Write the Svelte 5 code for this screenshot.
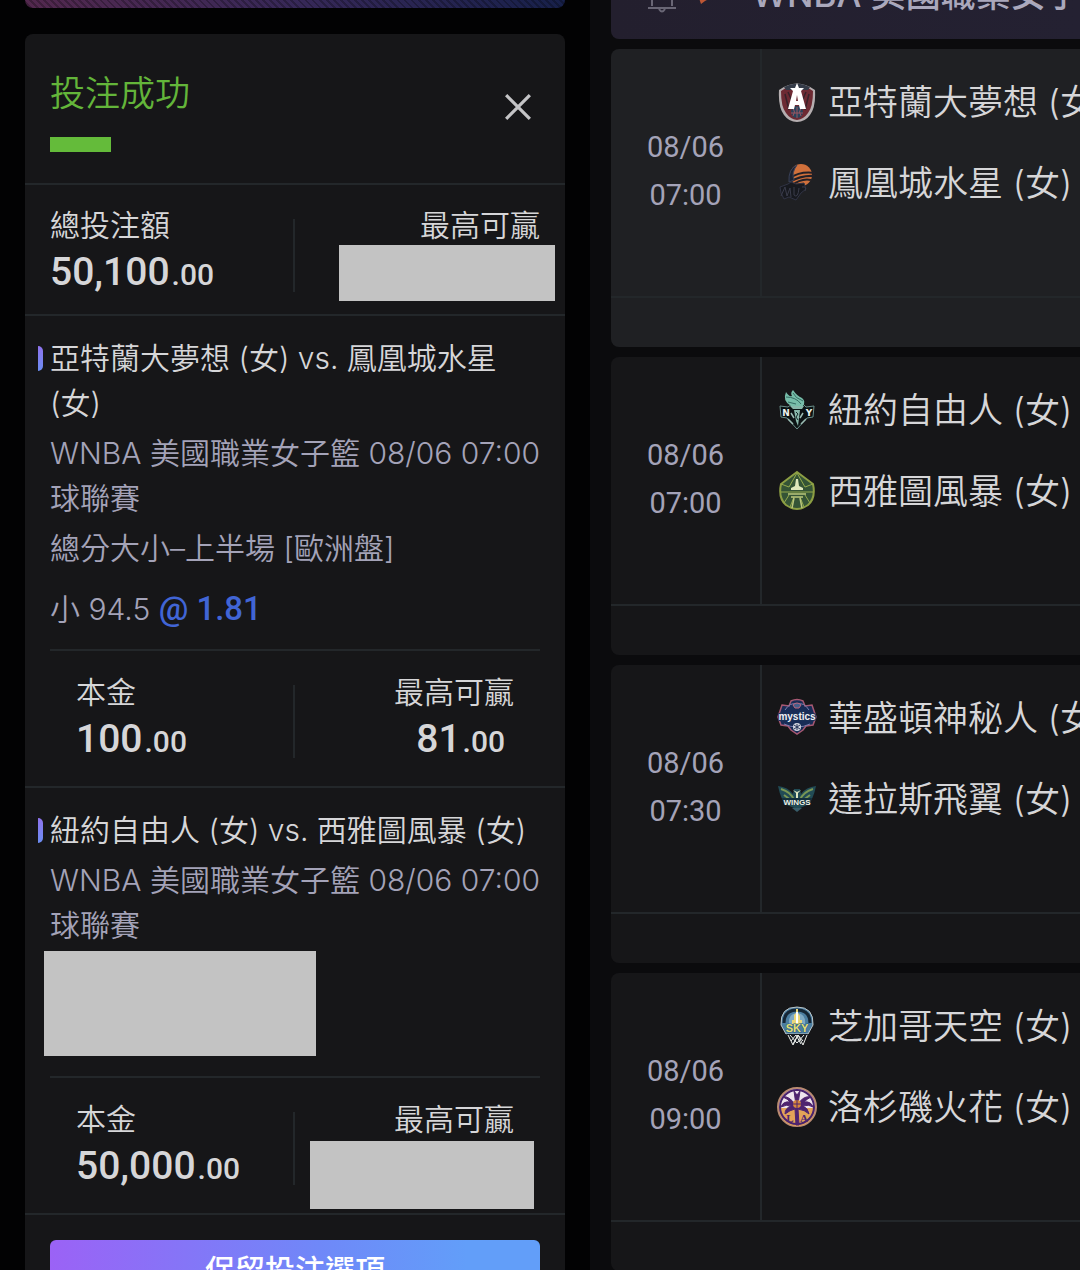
<script lang="ts">
  // Bet slip receipt on the left, fixture list of the league on the right.
  type Amount = { whole: string; cents: string }
  type Bet = {
    id: number
    title: string
    league: string
    time: string
    market?: string
    pick?: string
    odds?: string
    stake: Amount
    win?: Amount
  }

  const league = 'WNBA 美國職業女子籃球聯賽'

  const bets: Bet[] = [
    {
      id: 1,
      title: '亞特蘭大夢想 (女) vs. 鳳凰城水星 (女)',
      league,
      time: '08/06 07:00',
      market: '總分大小–上半場 [歐洲盤]',
      pick: '小 94.5',
      odds: '@ 1.81',
      stake: { whole: '100', cents: '.00' },
      win: { whole: '81', cents: '.00' }
    },
    {
      id: 2,
      title: '紐約自由人 (女) vs. 西雅圖風暴 (女)',
      league,
      time: '08/06 07:00',
      stake: { whole: '50,000', cents: '.00' }
    }
  ]

  const matches = [
    { date: '08/06', time: '07:00', home: ['dream', '亞特蘭大夢想 (女)'], away: ['mercury', '鳳凰城水星 (女)'] },
    { date: '08/06', time: '07:00', home: ['liberty', '紐約自由人 (女)'], away: ['storm', '西雅圖風暴 (女)'] },
    { date: '08/06', time: '07:30', home: ['mystics', '華盛頓神秘人 (女)'], away: ['wings', '達拉斯飛翼 (女)'] },
    { date: '08/06', time: '09:00', home: ['sky', '芝加哥天空 (女)'], away: ['sparks', '洛杉磯火花 (女)'] }
  ]

  let open = $state(true)
</script>

{#snippet amount(value: Amount)}
  <span class="amount">{value.whole}<small>{value.cents}</small></span>
{/snippet}

{#snippet logo(name: string)}
  <svg class="logo" viewBox="0 0 42 42" aria-hidden="true">
    {#if name === 'dream'}
      <path d="M3 9Q21-4 39 9Q40 26 34 34Q29 41 21 41Q13 41 8 34Q2 26 3 9Z" fill="#b5aeb0" />
      <path d="M5 10Q21-2 37 10Q37 26 32 32Q28 38 21 39Q14 38 10 32Q5 26 5 10Z" fill="#6d2a33" />
      <path d="M8 6Q21-1 34 6L32 9H10Z" fill="#343b48" />
      <path d="M9 13L13 29M33 13L29 29M12 11L16 20M30 11L26 20" stroke="#37222a" stroke-width="1.5" />
      <circle cx="21" cy="31" r="6" fill="#28445c" />
      <path d="M15 32H27M21 26V37M17 27Q20 31 17 35M25 27Q22 31 25 35" fill="none" stroke="#9b5561" />
      <path
        d="M21 2L23 7H28L25 10L30 28H24L23 24H19L18 28H12L17 10L14 7H19ZM21 14L20 20H22Z"
        fill="#fff"
        fill-rule="evenodd"
      />
    {:else if name === 'mercury'}
      <circle cx="25" cy="13" r="11" fill="#d0703b" />
      <path d="M14 16Q24 9 39 11M14 20Q25 13 39 14M15 24Q25 16 35 18" fill="none" stroke="#222027" stroke-width="2" />
      <path d="M13 20Q12 7 21 3Q15 11 18 18Z" fill="#1c2231" stroke="#3a4158" />
      <path d="M4 25L12 22L15 20L20 22L28 21L30 27L25 31L20 38L13 35L8 37L5 31Z" fill="#17191f" stroke="#303344" />
      <path d="M5 34L9 25L11 34L14 26L15 35M18 25V33Q22 37 23 26M26 25Q31 24 29 29" fill="none" stroke="#3a3c4b" />
    {:else if name === 'liberty'}
      <path d="M4 17L12 18L16 15H27L30 18L38 17L37 28L31 29L21 40L11 29L5 28Z" fill="#0b1213" stroke="#6a8e89" />
      <path d="M15 17Q6 12 10 3Q13 8 16 7Q14 4 17 1Q21 7 26 9Q30 12 27 17Z" fill="#77bda9" />
      <path d="M10 8Q20 8 25 15M17 4Q19 9 27 12M12 13L20 15" fill="none" stroke="#356c63" />
      <path d="M14 17H28L26 20H17ZM18 21H24L22 37L20 32Z" fill="#88b7aa" />
      <path d="M12 30L17 35M30 30L25 35M15 24L18 29M27 24L24 29" stroke="#9bbbb3" stroke-width="1.5" />
      <path d="M20 23L22 25L20 28L22 31" fill="none" stroke="#152b29" />
      <text x="10" y="27" class="block-mark" fill="#eef3ef">N</text>
      <text x="33" y="27" class="block-mark" fill="#eef3ef">Y</text>
    {:else if name === 'storm'}
      <path d="M21 2L37 14Q40 28 32 35Q21 43 10 35Q2 28 5 14Z" fill="#355436" stroke="#8c9e43" stroke-width="2" />
      <path d="M21 3L13 17L5 14M21 3L29 17L37 14M5 22H37M8 33L13 25M34 33L29 25M14 37L18 27M28 37L24 27" fill="none" stroke="#94a94c" />
      <path d="M20 9H22L23 16L27 18V20H15V18L19 16Z" fill="#dfe7bb" />
      <path d="M12 24H30M15 27H27" stroke="#bbc77c" stroke-width="1.5" />
      <path d="M18 28L16 38M24 28L26 38" stroke="#bbc77c" stroke-width="1.5" />
    {:else if name === 'mystics'}
      <path d="M6 8L13 9L15 4Q21 1 27 4L29 9L36 8L38 14L40 20L37 28L30 29L27 33L21 37L15 33L12 29L5 28L2 20L4 14Z" fill="#182c56" stroke="#a65872" stroke-width="1.5" />
      <path d="M9 13Q14 5 21 7Q28 5 33 13M8 27Q14 30 21 30Q28 30 34 27" fill="none" stroke="#7a7eae" />
      <path d="M17 8Q21 4 25 8L23 11H19Z" fill="#465e8b" stroke="#bd667c" />
      <circle cx="21" cy="30" r="4" fill="#d2d5dd" />
      <path d="M18 28L24 32M18 32L24 28M21 27V33" stroke="#273559" />
      <text x="21" y="23" class="mystic-mark" fill="#f0eff4" stroke="#1b3157" stroke-width="2" paint-order="stroke">mystics</text>
    {:else if name === 'wings'}
      <path d="M2 8Q12 9 17 16L18 11H24L25 16Q30 9 40 8Q37 23 31 27L24 30L21 33L18 30L11 27Q5 23 2 8Z" fill="#214b55" />
      <path d="M5 11Q15 14 18 22M37 11Q27 14 24 22M8 17L16 23M34 17L26 23" fill="none" stroke="#7a9754" stroke-width="2" />
      <path d="M17 12L20 15L20 20H22L22 15L25 12L21 14Z" fill="#e0e8c2" />
      <path d="M6 20H36L34 27H8Z" fill="#14303d" />
      <path d="M16 30H26L21 34Z" fill="#385c69" />
      <text x="21" y="27" class="wing-mark" fill="#edf0e5">WINGS</text>
    {:else if name === 'sky'}
      <path d="M5 20Q4 2 21 2Q38 2 37 20L32 29H10Z" fill="#4b7da0" stroke="#bcc6c8" />
      <path d="M8 18Q8 5 21 5Q34 5 34 18" fill="none" stroke="#152635" stroke-width="3" />
      <path d="M13 19Q12 9 21 8Q30 9 29 19Z" fill="#7fa9c4" />
      <path d="M16 19V15H18V10L20 8V4H22V8L24 11V15H26V19Z" fill="#ead77a" />
      <path d="M21 7V18" stroke="#fff" stroke-width="2" />
      <path d="M10 29H32L28 34L25 41L21 38L17 41L14 34Z" fill="#151a20" />
      <path d="M12 30L17 40L22 30L27 40L31 30M14 30L21 38L28 30M15 36L20 30L25 39M27 36L22 30L17 39" fill="none" stroke="#eef0ed" />
      <text x="21" y="27" class="sky-mark" fill="#e6df72" stroke="#286087" paint-order="stroke">SKY</text>
    {:else}
      <circle cx="21" cy="21" r="19" fill="#eee4ed" stroke="#b98a72" stroke-width="2" />
      <path d="M3 22H39A18 18 0 0 1 3 22Z" fill="#e3a258" />
      <circle cx="21" cy="21" r="17" fill="none" stroke="#49236e" stroke-width="2" />
      <path d="M20 19Q12 9 7 11Q12 13 14 16Q7 15 5 21Q11 18 15 20Q9 22 9 28Q14 24 19 23L20 39H23L22 23Q29 24 33 28Q32 22 27 20Q33 18 37 21Q35 15 28 16Q31 13 35 11Q28 9 22 18L24 5L21 9L18 5Z" fill="#4f246f" stroke="#4f246f" />
      <circle cx="21" cy="18" r="4" fill="#d9873d" />
      <path d="M21 14V22M17 18H25" stroke="#4f246f" />
      <text x="14" y="36" class="serif-mark" fill="#4f246f">L</text>
      <text x="28" y="36" class="serif-mark" fill="#4f246f">A</text>
    {/if}
  </svg>
{/snippet}

<main>
  <aside>
    <div class="promo"></div>
    {#if open}
      <section class="slip">
        <header class="slip-head">
          <div>
            <h1>投注成功</h1>
            <div class="redacted green"></div>
          </div>
          <button class="close" aria-label="關閉" onclick={() => (open = false)}>
            <svg viewBox="0 0 26 26"><path d="M2 2L24 24M24 2L2 24" /></svg>
          </button>
        </header>

        <div class="stats total">
          <div class="stat">
            <span>總投注額</span>
            {@render amount({ whole: '50,100', cents: '.00' })}
          </div>
          <div class="stat right">
            <span>最高可贏</span>
            <i class="redacted total-win"></i>
          </div>
        </div>

        {#each bets as bet (bet.id)}
          <article class="bet">
            <h2>{bet.title}</h2>
            <div class="league"><span>{bet.league}</span><time>{bet.time}</time></div>
            {#if bet.market}
              <p class="market">{bet.market}</p>
              <p class="pick">{bet.pick} <b>{bet.odds}</b></p>
            {:else}
              <div class="redacted selection"></div>
            {/if}
            <div class="stats">
              <div class="stat">
                <span>本金</span>
                {@render amount(bet.stake)}
              </div>
              <div class="stat right">
                <span>最高可贏</span>
                {#if bet.win}
                  {@render amount(bet.win)}
                {:else}
                  <i class="redacted bet-win"></i>
                {/if}
              </div>
            </div>
          </article>
        {/each}

        <footer><button class="keep">保留投注選項</button></footer>
      </section>
    {/if}
  </aside>

  <section class="fixtures">
    <header class="league-head">
      <svg class="bell" viewBox="0 0 30 36" aria-hidden="true">
        <path d="M5 29V15Q5 5 15 5Q25 5 25 15V29M1 31H29M12 32Q15 37 18 32" />
      </svg>
      <svg class="flame" viewBox="0 0 30 36" aria-hidden="true">
        <path d="M5 4Q25 3 25 14Q20 20 12 24L8 27L5 18Z" />
      </svg>
      <h2>{league}</h2>
    </header>

    {#each matches as match, i (i)}
      <article class="match" class:active={i === 0}>
        <div class="match-body">
          <div class="when"><span>{match.date}</span><span>{match.time}</span></div>
          <div class="teams">
            {#each [match.home, match.away] as [mark, name] (mark)}
              <div class="team">{@render logo(mark)}<span>{name}</span></div>
            {/each}
          </div>
        </div>
        <div class="match-foot"></div>
      </article>
    {/each}
  </section>
</main>

<style>
  :global(body) {
    margin: 0;
    background: #020203;
  }
  main {
    --line: #23272a;
    --text: #d6d6d8;
    --muted: #a4a3b8;
    --card: #161618;
    display: grid;
    grid-template-columns: minmax(0, 59fr) minmax(0, 49fr);
    height: 100vh;
    overflow: hidden;
    color: var(--text);
    font-family: Inter, 'Noto Sans CJK TC', sans-serif;
    font-size: 30px;
    font-weight: 350;
    line-height: 45px;
  }
  h1,
  h2,
  p {
    margin: 0;
    font-weight: inherit;
  }
  button {
    padding: 0;
    border: 0;
    font: inherit;
    cursor: pointer;
  }
  aside {
    padding: 0 25px;
    background: #020203;
  }
  .promo {
    height: 8px;
    margin-bottom: 26px;
    border-radius: 0 0 8px 8px;
    background:
      repeating-linear-gradient(45deg, transparent 0 3px, rgba(0, 0, 0, 0.25) 3px 5px),
      linear-gradient(90deg, #53284e, #372858 50%, #17204a);
  }
  .slip {
    border-radius: 8px;
    background: var(--card);
  }
  .slip-head {
    display: flex;
    justify-content: space-between;
    padding: 35px 33px 31px 25px;
    border-bottom: 2px solid var(--line);
  }
  h1 {
    margin-bottom: 20px;
    color: #63b53a;
    font-size: 35px;
    line-height: 48px;
  }
  .redacted {
    background: #c3c3c3;
  }
  .green {
    width: 61px;
    height: 15px;
    background: #64bb3a;
  }
  .close {
    width: 28px;
    height: 28px;
    margin-top: 24px;
    background: none;
  }
  .close svg {
    display: block;
    fill: none;
    stroke: #c4c4c6;
    stroke-width: 3;
  }
  .stats {
    position: relative;
    display: grid;
    grid-template-columns: 1fr 1fr;
    padding: 19px 26px 20px;
    border-top: 2px solid var(--line);
  }
  .stats::after {
    content: '';
    position: absolute;
    top: 34px;
    left: calc(50% - 2px);
    width: 2px;
    height: 73px;
    background: var(--line);
  }
  .total {
    padding: 18px 25px 15px;
    border-top: 0;
    border-bottom: 2px solid var(--line);
  }
  .stat {
    position: relative;
    display: flex;
    flex-direction: column;
  }
  .right {
    align-items: flex-end;
  }
  .amount {
    font-family: Roboto, sans-serif;
    font-size: 39px;
    font-weight: 500;
    line-height: 49px;
  }
  .right .amount {
    padding-right: 9px;
  }
  .amount small {
    padding-left: 2px;
    font-size: 30px;
  }
  .total-win {
    position: absolute;
    top: 42px;
    right: -15px;
    width: 216px;
    height: 56px;
  }
  .bet-win {
    position: absolute;
    top: 44px;
    right: -20px;
    width: 224px;
    height: 68px;
    z-index: 1;
  }
  .bet {
    position: relative;
    padding: 20px 25px 0;
    border-bottom: 2px solid var(--line);
  }
  .bet::before {
    content: '';
    position: absolute;
    top: 30px;
    left: 13px;
    width: 5px;
    height: 25px;
    border-radius: 0 5px 5px 0;
    background: linear-gradient(#8f73ee, #6b8df2);
  }
  .bet h2 {
    font-size: 30px;
  }
  .league {
    display: flex;
    margin: 5px 0;
    color: var(--muted);
  }
  .league span {
    flex: 1;
  }
  .league time {
    white-space: nowrap;
  }
  .market,
  .pick {
    color: var(--muted);
  }
  .pick {
    margin: 15px 0 17px;
  }
  .pick b {
    color: #4165d5;
    font-family: Roboto, sans-serif;
    font-size: 33px;
    font-weight: 500;
  }
  .selection {
    width: 272px;
    height: 105px;
    margin: -2px 0 20px -6px;
  }
  footer {
    padding: 25px;
  }
  .keep {
    width: 100%;
    height: 60px;
    border-radius: 6px;
    background: linear-gradient(90deg, #9b62f6, #6f88f8 55%, #629ef9 85%);
    color: #fff;
    font-weight: 500;
  }
  .fixtures {
    display: flex;
    flex-direction: column;
    gap: 10px;
    padding-left: 21px;
    background: #0b0b0d;
    overflow: hidden;
  }
  .league-head {
    display: flex;
    flex: none;
    align-items: flex-end;
    height: 39px;
    padding-left: 36px;
    border-radius: 0 0 0 8px;
    background: linear-gradient(90deg, #231f2e, #242132);
    overflow: hidden;
    white-space: nowrap;
  }
  .league-head svg {
    flex: none;
    width: 30px;
    height: 36px;
    margin-bottom: 26px;
  }
  .bell {
    fill: none;
    stroke: #696675;
    stroke-width: 2;
  }
  .league-head .flame {
    margin: 0 29px 26px 16px;
    fill: #bd5735;
  }
  .league-head h2 {
    color: #aaa8bc;
    font-size: 35px;
    font-weight: 500;
    line-height: 48px;
    margin-bottom: 21px;
  }
  .match {
    flex: none;
    border-radius: 8px 0 0 8px;
    background: var(--card);
  }
  .active {
    background: #1f2023;
  }
  .match-body {
    display: flex;
    height: 247px;
    border-bottom: 2px solid var(--line);
  }
  .match-foot {
    height: 49px;
  }
  .when {
    display: flex;
    flex: none;
    flex-direction: column;
    justify-content: center;
    width: 149px;
    padding-bottom: 4px;
    border-right: 2px solid var(--line);
    color: var(--muted);
    font-family: Roboto, sans-serif;
    font-size: 29px;
    font-weight: 400;
    line-height: 48px;
    text-align: center;
  }
  .teams {
    display: flex;
    flex-direction: column;
    gap: 33px;
    padding: 29px 0 0 14px;
  }
  .team {
    display: flex;
    align-items: center;
    gap: 10px;
    font-size: 35px;
    line-height: 48px;
    white-space: nowrap;
  }
  .logo {
    flex: none;
    width: 42px;
    height: 42px;
  }
  .logo text {
    text-anchor: middle;
    font-weight: 700;
  }
  .serif-mark {
    font-family: 'Liberation Serif', serif;
    font-size: 11px;
  }
  .block-mark {
    font-family: 'DejaVu Sans', sans-serif;
    font-size: 9px;
  }
  .mystic-mark {
    font-family: 'Liberation Sans', sans-serif;
    font-size: 10px;
  }
  .wing-mark {
    font-family: 'Liberation Sans', sans-serif;
    font-size: 8px;
  }
  .sky-mark {
    font-family: 'Liberation Sans', sans-serif;
    font-size: 11px;
  }
</style>
